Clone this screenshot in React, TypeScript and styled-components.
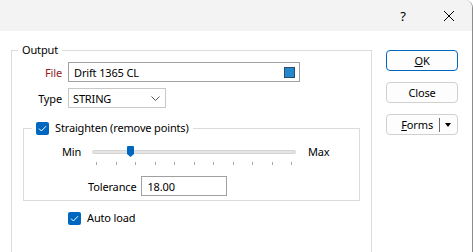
import styled, { createGlobalStyle } from "styled-components";

const GlobalStyle = createGlobalStyle`
    html, body {
        margin: 0;
        padding: 0;
        background: #fff;
    }
    body {
        font-family: "Noto Sans", "Liberation Sans", sans-serif;
        font-size: 11px;
        letter-spacing: -0.15px;
        color: #000;
    }
`;

const Window = styled.div`
    width: 472px;
    height: 252px;
    border-right: 1px solid #8c8c8c;
    border-top-right-radius: 8px;
    overflow: hidden;
    display: flex;
    flex-direction: column;
    background: #fff;
`;

const TitleBar = styled.div`
    height: 31px;
    flex: none;
    background: #f3f3f3;
    display: flex;
    align-items: center;
    justify-content: flex-end;
`;

const TitleButton = styled.div`
    width: 46px;
    height: 30px;
    display: flex;
    align-items: center;
    justify-content: center;
    font-size: 13px;
`;

const Body = styled.div`
    flex: 1;
    display: flex;
    align-items: flex-start;
    padding: 0 0 0 11px;
`;

const Group = styled.fieldset`
    margin: 12px 0 0;
    padding: 5px 0 0 0;
    border: 1px solid #dcdcdc;
    border-bottom: none;
    width: 361px;
    height: 240px;
    box-sizing: border-box;
    display: flex;
    flex-direction: column;
    min-width: 0;
`;

const Legend = styled.legend`
    padding: 0 4px;
    margin-left: 6px;
    line-height: 14px;
    display: flex;
    align-items: center;
    gap: 6px;
`;

const SubGroup = styled(Group)`
    margin: 13px 11px 0;
    padding: 11px 0 4px 0;
    border-bottom: 1px solid #dcdcdc;
    width: auto;
    height: auto;
`;

const SubLegend = styled(Legend)`
    margin-left: 8px;
    padding: 0 4px 0 4px;
`;

const FieldRow = styled.div<{ $top?: number }>`
    display: flex;
    align-items: center;
    height: 20px;
    margin-top: ${(p) => p.$top ?? 0}px;
`;

const Label = styled.span<{ $accent?: boolean }>`
    width: 50px;
    text-align: right;
    margin-right: 6px;
    color: ${(p) => (p.$accent ? "#8b1c1c" : "#000")};
`;

const TextBox = styled.div<{ $width: number }>`
    width: ${(p) => p.$width}px;
    height: 20px;
    box-sizing: border-box;
    border: 1px solid #a0a0a0;
    display: flex;
    align-items: center;
    justify-content: space-between;
    padding: 0 4px 0 5px;
`;

const Swatch = styled.span`
    width: 9px;
    height: 9px;
    background: #2688cc;
    border: 1px solid #2d4a66;
`;

const Select = styled(TextBox)`
    border-color: #c8c8c8;
    padding: 0 5px 0 4px;
`;

const Check = styled.span`
    width: 13px;
    height: 13px;
    border-radius: 2px;
    background: #0067c0;
    display: flex;
    align-items: center;
    justify-content: center;
    flex: none;
`;

const SliderRow = styled.div`
    display: flex;
    align-items: flex-start;
    padding-left: 38px;
    height: 19px;
`;

const SliderEnd = styled.span<{ $side: "min" | "max" }>`
    line-height: 12px;
    width: ${(p) => (p.$side === "min" ? "30px" : "auto")};
    margin-left: ${(p) => (p.$side === "max" ? "12px" : "0")};
`;

const Slider = styled.div`
    position: relative;
    width: 204px;
    height: 19px;
`;

const Track = styled.div`
    position: absolute;
    left: 0;
    right: 0;
    top: 4px;
    height: 2px;
    background: #e4e4e4;
    border: 1px solid #d6d6d6;
    border-radius: 2px;
`;

const Thumb = styled.svg`
    position: absolute;
    top: 0;
`;

const Ticks = styled.div`
    position: absolute;
    left: 4px;
    right: 4px;
    top: 16px;
    height: 3px;
    display: flex;
    justify-content: space-between;
`;

const Tick = styled.span`
    width: 1px;
    height: 3px;
    background: #a8a8a8;
`;

const ToleranceRow = styled.div`
    display: flex;
    align-items: center;
    padding-left: 64px;
    margin-top: 11px;
    gap: 5px;
`;

const CheckRow = styled.div`
    display: flex;
    align-items: center;
    gap: 6px;
    margin: 10px 0 0 56px;
    line-height: 14px;
`;

const Buttons = styled.div`
    display: flex;
    flex-direction: column;
    gap: 11px;
    margin: 19px 0 0 14px;
`;

const Button = styled.div<{ $primary?: boolean }>`
    width: 72px;
    height: 21px;
    box-sizing: border-box;
    border: 1px solid ${(p) => (p.$primary ? "#0067c0" : "#d0d0d0")};
    border-radius: 4px;
    background: #fdfdfd;
    display: flex;
    align-items: center;
    justify-content: center;
`;

const SplitButton = styled(Button)`
    justify-content: flex-end;
`;

const Divider = styled.span`
    width: 1px;
    height: 14px;
    background: #6e6e6e;
    margin: 0 5px 0 6px;
`;

const Arrow = styled.span`
    width: 0;
    height: 0;
    border-left: 3.5px solid transparent;
    border-right: 3.5px solid transparent;
    border-top: 4px solid #000;
    margin-right: 6px;
`;

function CheckMark() {
    return (
        <svg width="9" height="7" viewBox="0 0 9 7">
            <path d="M1 3.6 L3.4 6 L8 1.2" fill="none" stroke="#fff" strokeWidth="1" />
        </svg>
    );
}

export default function App() {
    const ticks = Array.from({ length: 11 });
    const thumbLeft = 35;
    return (
        <>
            <GlobalStyle />
            <Window>
                <TitleBar>
                    <TitleButton>?</TitleButton>
                    <TitleButton>
                        <svg width="12" height="12" viewBox="0 0 12 12">
                            <path d="M1 1 L11 11 M11 1 L1 11" stroke="#000" strokeWidth="1" />
                        </svg>
                    </TitleButton>
                </TitleBar>
                <Body>
                    <Group>
                        <Legend>Output</Legend>
                        <FieldRow>
                            <Label $accent>File</Label>
                            <TextBox $width={232}>
                                <span>Drift 1365 CL</span>
                                <Swatch />
                            </TextBox>
                        </FieldRow>
                        <FieldRow $top={6}>
                            <Label>Type</Label>
                            <Select $width={98}>
                                <span>STRING</span>
                                <svg width="9" height="5" viewBox="0 0 9 5">
                                    <path d="M0.5 0.5 L4.5 4.5 L8.5 0.5" fill="none" stroke="#555" strokeWidth="1" />
                                </svg>
                            </Select>
                        </FieldRow>
                        <SubGroup>
                            <SubLegend>
                                <Check>
                                    <CheckMark />
                                </Check>
                                Straighten (remove points)
                            </SubLegend>
                            <SliderRow>
                                <SliderEnd $side="min">Min</SliderEnd>
                                <Slider>
                                    <Track />
                                    <Thumb width="7" height="11" viewBox="0 0 7 11" style={{ left: thumbLeft }}>
                                        <path d="M1 0 H6 Q7 0 7 1 V8 L3.5 11 L0 8 V1 Q0 0 1 0 Z" fill="#0067c0" />
                                    </Thumb>
                                    <Ticks>
                                        {ticks.map((_, i) => (
                                            <Tick key={i} />
                                        ))}
                                    </Ticks>
                                </Slider>
                                <SliderEnd $side="max">Max</SliderEnd>
                            </SliderRow>
                            <ToleranceRow>
                                <span>Tolerance</span>
                                <TextBox $width={86}>18.00</TextBox>
                            </ToleranceRow>
                        </SubGroup>
                        <CheckRow>
                            <Check>
                                <CheckMark />
                            </Check>
                            Auto load
                        </CheckRow>
                    </Group>
                    <Buttons>
                        <Button $primary>
                            <u>O</u>K
                        </Button>
                        <Button>Close</Button>
                        <SplitButton>
                            <span>
                                <u>F</u>orms
                            </span>
                            <Divider />
                            <Arrow />
                        </SplitButton>
                    </Buttons>
                </Body>
            </Window>
        </>
    );
}
